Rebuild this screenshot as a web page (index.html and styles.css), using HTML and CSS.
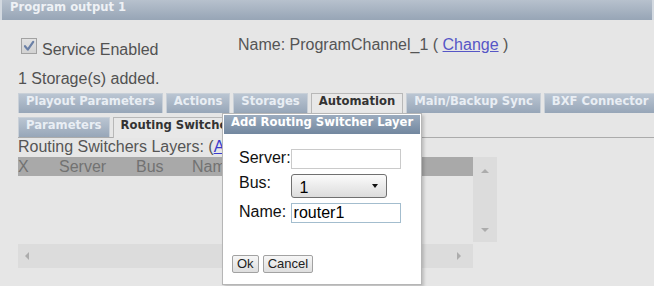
FILE: index.html
```html
<!DOCTYPE html>
<html>
<head>
<meta charset="utf-8">
<title>Program output 1</title>
<link rel="stylesheet" href="styles.css">
</head>
<body>
<div class="panel">
  <div class="panel-title">Program output 1</div>
  <div class="panel-body">
    <div class="service-row">
      <label class="service">
        <span class="check"><svg width="14" height="14" viewBox="0 0 14 14"><path d="M3 7.2 L5.8 10.6 L11.2 2.8" fill="none" stroke="#6b80a6" stroke-width="2.2" stroke-linecap="round" stroke-linejoin="round"/></svg></span>
        <span class="service-text">Service Enabled</span>
      </label>
      <div class="name">Name: ProgramChannel_1 ( <a href="#" class="link">Change</a> )</div>
    </div>
    <div class="storage">1 Storage(s) added.</div>
    <div class="tabs tabs-main">
      <span class="tab">Playout Parameters</span>
      <span class="tab">Actions</span>
      <span class="tab">Storages</span>
      <span class="tab active">Automation</span>
      <span class="tab">Main/Backup Sync</span>
      <span class="tab">BXF Connector</span>
    </div>
    <div class="tabs tabs-sub">
      <span class="tab">Parameters</span>
      <span class="tab active">Routing Switchers</span>
    </div>
    <div class="layers-title">Routing Switchers Layers: (<a href="#" class="link add">Add</a>)</div>
    <div class="grid-box">
      <div class="grid-view">
        <div class="grid-head"><span>X</span><span>Server</span><span>Bus</span><span>Name</span></div>
      </div>
      <div class="vscroll"><span class="arrow up"></span><span class="arrow down"></span></div>
      <div class="hscroll"><span class="arrow left"></span><span class="arrow right"></span></div>
      <div class="corner"></div>
    </div>
  </div>

  <div class="dialog">
    <div class="dialog-title">Add Routing Switcher Layer</div>
    <div class="form">
      <span class="label">Server:</span>
      <span class="input"></span>
      <span class="label">Bus:</span>
      <span class="select"><span class="select-value">1</span><span class="select-arrow"></span></span>
      <span class="label">Name:</span>
      <span class="input focused">router1</span>
    </div>
    <div class="buttons">
      <button class="btn">Ok</button>
      <button class="btn">Cancel</button>
    </div>
  </div>
</div>
</body>
</html>
```
FILE: styles.css
```css
* { box-sizing: border-box; }
html, body { margin: 0; padding: 0; }
body {
  width: 654px;
  height: 286px;
  overflow: hidden;
  background: #e6e6e6;
  font-family: "Liberation Sans", Arial, sans-serif;
  font-size: 16px;
  color: #525252;
}
.panel { position: relative; height: 286px; }

.panel-title {
  height: 20px;
  line-height: 20px;
  padding-left: 8px;
  border-left: 2px solid #d3d9e0;
  border-right: 2px solid #d3d9e0;
  background: linear-gradient(#b7c1cd, #97a5b6);
  color: #eef1f5;
  font: bold 11.6px "DejaVu Sans", Verdana, sans-serif;
}

.panel-body { padding-left: 18px; }

.service-row { display: flex; align-items: flex-start; padding-top: 16px; line-height: 18px; }
.service { display: flex; align-items: flex-start; margin-top: 2px; margin-left: 3px; width: 217px; }
.check {
  width: 16px; height: 16px;
  border: 1px solid #a2a2a2;
  background: linear-gradient(#e2e2e2, #d2d2d2);
  display: flex; align-items: center; justify-content: center;
}
.service-text { margin-left: 5px; margin-top: 3px; }
.name { color: #555; }
.link { color: #5656c6; text-decoration: underline; }
.link.add { color: #3b3bcc; }

.storage { margin-top: 11px; line-height: 18px; }

.tabs { display: flex; gap: 3px; height: 20px; }
.tabs-main { margin-top: 5px; }
.tabs-sub { margin-top: 4px; height: 21px; border-bottom: 1px solid #ababab; }
.tab {
  height: 20px;
  line-height: 19px;
  padding: 0 7px;
  border: 1px solid #c9d0d8;
  border-bottom: none;
  background: linear-gradient(#bac5d2, #97a6b8);
  color: #e9eef4;
  font: bold 11.6px "DejaVu Sans", Verdana, sans-serif;
  white-space: nowrap;
}
.tab.active { background: #e8e8e8; color: #333; border-color: #b8b8b8; }
.tabs-sub .tab.active { height: 21px; }

.layers-title { line-height: 18px; color: #555; }

.grid-box {
  margin-top: 1px;
  width: 479px;
  display: grid;
  grid-template-columns: 455px 24px;
  grid-template-rows: 87px 24px;
}
.grid-view { overflow: hidden; }
.grid-head {
  display: grid;
  grid-template-columns: 41px 77px 56px 1fr;
  height: 19px;
  line-height: 19px;
  background: #a9a9a9;
  color: #727272;
}
.vscroll { position: relative; background: #dcdcdc; margin-bottom: 2px; }
.hscroll { position: relative; background: #dcdcdc; }
.corner { background: #e6e6e6; }

.arrow { position: absolute; width: 0; height: 0; border: 4px solid transparent; }
.arrow.up { left: 8px; top: 12px; border-bottom: 4px solid #acacac; border-top: none; }
.arrow.down { left: 8px; bottom: 10px; border-top: 4px solid #acacac; border-bottom: none; }
.arrow.left { left: 7px; top: 8px; border-right: 4px solid #acacac; border-left: none; }
.arrow.right { right: 12px; top: 8px; border-left: 4px solid #acacac; border-right: none; }

.dialog {
  position: absolute;
  left: 222px;
  top: 113px;
  width: 200px;
  height: 172px;
  padding: 1px;
  background: #fff;
  border: 1px solid #b6b6b6;
  box-shadow: 2px 2px 3px rgba(0, 0, 0, 0.18);
}
.dialog-title {
  height: 19px;
  line-height: 19px;
  padding-left: 7px;
  background: linear-gradient(#9cacbf, #72879f);
  color: #fff;
  font: bold 11.6px "DejaVu Sans", Verdana, sans-serif;
  white-space: nowrap;
}
.form {
  display: grid;
  grid-template-columns: auto auto;
  justify-content: start;
  align-items: start;
  row-gap: 5px;
  margin-top: 15px;
  padding-left: 15px;
  color: #111;
  line-height: 18px;
}
.input {
  display: block;
  width: 110px;
  height: 20px;
  padding: 0 2px;
  border: 1px solid #cacaca;
  background: #fff;
  color: #000;
  line-height: 18px;
}
.input.focused { border-color: #a3bdce; }
.select {
  position: relative;
  display: block;
  width: 96px;
  height: 24px;
  border: 1px solid #707070;
  border-radius: 3px;
  background: linear-gradient(#fbfbfb, #dcdcdc);
  color: #000;
}
.select-value { position: absolute; left: 8px; top: 4px; line-height: 18px; }
.select-arrow {
  position: absolute;
  right: 8px;
  top: 9px;
  width: 0; height: 0;
  border-left: 3.5px solid transparent;
  border-right: 3.5px solid transparent;
  border-top: 4px solid #111;
}
.buttons { display: flex; gap: 4px; margin-top: 32px; padding-left: 8px; }
.btn {
  height: 18px;
  padding: 0 4px;
  border: 1px solid #a2a2a2;
  border-radius: 2px;
  background: linear-gradient(#f6f6f6, #dedede);
  color: #222;
  font: 13px "Liberation Sans", Arial, sans-serif;
  line-height: 16px;
}
```
